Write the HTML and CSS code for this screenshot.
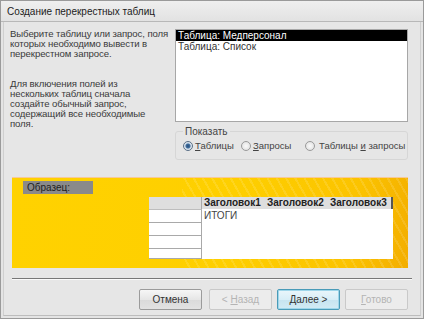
FILE: index.html
```html
<!DOCTYPE html>
<html lang="ru">
<head>
<meta charset="UTF-8">
<title>Создание перекрестных таблиц</title>
<link rel="stylesheet" href="styles.css">
</head>
<body>

<div class="window">
  <div class="titlebar">Создание перекрестных таблиц</div>

  <div class="client">
    <div class="top">
      <div class="intro">
        <p>Выберите таблицу или запрос, поля<br>которых необходимо вывести в<br>перекрестном запросе.</p>
        <p>Для включения полей из<br>нескольких таблиц сначала<br>создайте обычный запрос,<br>содержащий все необходимые<br>поля.</p>
      </div>

      <div class="right">
        <div class="listbox">
          <div class="item selected">Таблица: Медперсонал</div>
          <div class="item">Таблица: Список</div>
        </div>

        <fieldset class="group">
          <legend>Показать</legend>
          <label class="radio first"><span class="dot checked"></span><span><u>Т</u>аблицы</span></label>
          <label class="radio second"><span class="dot"></span><span><u>З</u>апросы</span></label>
          <label class="radio wide"><span class="dot"></span><span>Таблицы <u>и</u> запросы</span></label>
        </fieldset>
      </div>
    </div>

    <!-- sample preview of the crosstab -->
    <div class="sample">
      <div class="stripes"></div>
      <div class="sample-label">Образец:</div>
      <div class="grid">
        <div class="rowheads">
          <div class="rh head"></div>
          <div class="rh"></div>
          <div class="rh"></div>
          <div class="rh"></div>
          <div class="rh last"></div>
        </div>
        <div class="cols">
          <div class="colheads">
            <div class="ch">Заголовок1</div>
            <div class="ch">Заголовок2</div>
            <div class="ch">Заголовок3</div>
          </div>
          <div class="body">ИТОГИ</div>
        </div>
      </div>
    </div>

    <div class="separator"></div>

    <div class="buttons">
      <button class="btn">Отмена</button>
      <button class="btn disabled">&lt; <u>Н</u>азад</button>
      <button class="btn default"><u>Д</u>алее &gt;</button>
      <button class="btn disabled"><u>Г</u>отово</button>
    </div>
  </div>
</div>

</body>
</html>
```

FILE: styles.css
```css
/* General Styles */
html, body {
  margin: 0;
  padding: 0;
  background: #ffffff;
}

body {
  font-family: "Liberation Sans", Arial, sans-serif;
  font-size: 10px;
  color: #333;
}

.window {
  width: 422px;
  height: 317px;
  border: 1px solid #9a9a9a;
  background: #e4e4e4;
  display: flex;
  flex-direction: column;
}

.titlebar {
  height: 20px;
  line-height: 21px;
  padding-left: 6px;
  font-size: 10px;
  color: #222;
  background: linear-gradient(#efefef, #e2e2e2);
  border-bottom: 1px solid #b8b8b8;
}

.client {
  flex: 1;
  margin: 0 2px 2px 2px;
  border-left: 1px solid #cfcfcf;
  border-right: 1px solid #cfcfcf;
  border-bottom: 1px solid #bdbdbd;
  background: #e6e6e6;
  display: flex;
  flex-direction: column;
}

/* Top part */
.top {
  display: flex;
  padding: 7px 0 0 6px;
}

.intro {
  width: 162px;
  color: #3a3a3a;
  font-size: 9.6px;
  letter-spacing: -0.1px;
  white-space: nowrap;
}

.intro p {
  margin: 0 0 20px 0;
  line-height: 10px;
}

.right {
  margin-left: 3px;
  width: 233px;
}

.listbox {
  height: 91px;
  background: #fff;
  border: 1px solid #a7a7a7;
}

.item {
  height: 11px;
  line-height: 11px;
  padding-left: 2px;
  color: #333;
}

.item.selected {
  background: #000;
  color: #fff;
}

.group {
  margin: 4px 0 0 0;
  padding: 3px 0 8px 7px;
  border: 1px solid #d6d6d6;
  border-radius: 3px;
  display: flex;
  align-items: center;
}

.group legend {
  padding: 0 2px;
  margin-left: 0;
  color: #444;
}

.radio {
  display: flex;
  align-items: center;
  color: #444;
  font-size: 9.5px;
  white-space: nowrap;
}

.radio.first {
  width: 58px;
}

.radio.second {
  width: 64px;
}

.dot {
  width: 8px;
  height: 8px;
  border-radius: 50%;
  border: 1px solid #9a9a9a;
  background: radial-gradient(#fafafa, #dcdcdc);
  margin-right: 2px;
  box-sizing: content-box;
}

.radio.wide .dot {
  margin-right: 4px;
}

.dot.checked {
  border-color: #5a6f86;
  background: radial-gradient(circle, #2c4e78 0, #3d6d9e 2px, #cfdbe8 3px, #f3f6f9 5px);
}

/* Sample panel */
.sample {
  position: relative;
  margin: 17px 12px 0 8px;
  height: 90px;
  border-top: 1px solid #f7c997;
  background: linear-gradient(100deg, #ffd200 0%, #fecf00 55%, #fbc300 85%, #f3ae00 100%);
  overflow: hidden;
}

.stripes {
  position: absolute;
  left: 170px;
  top: 0;
  width: 240px;
  height: 90px;
  background: repeating-linear-gradient(60deg, rgba(255,255,255,0) 0 6px, rgba(255,255,255,0.12) 6px 8px);
}

.sample-label {
  position: relative;
  width: 66px;
  height: 13px;
  line-height: 13px;
  margin: 3px 0 0 11px;
  padding-left: 4px;
  background: #8a8a8a;
  color: #222;
}

.grid {
  position: relative;
  display: flex;
  margin: 3px 0 0 137px;
  width: 244px;
  height: 62px;
}

.rowheads {
  width: 61px;
  background: #fff;
  display: flex;
  flex-direction: column;
}

.rh {
  height: 12px;
  border-bottom: 1px solid #a9a9a9;
  border-right: 1px solid #a9a9a9;
}

.rh.head {
  background: #dedede;
  border-bottom-color: #bdbdbd;
}

.rh.last {
  flex: 1;
}

.cols {
  flex: 1;
  display: flex;
  flex-direction: column;
}

.colheads {
  display: flex;
  height: 12px;
  background: #dedede;
  border-right: 2px solid #555;
}

.ch {
  width: 61px;
  font-weight: bold;
  line-height: 12px;
  padding-left: 2px;
  color: #222;
}

.body {
  flex: 1;
  background: #fff;
  padding: 1px 0 0 2px;
  color: #444;
}

/* Separator */
.separator {
  margin: 10px 8px 0 8px;
  height: 1px;
  background: #777;
  border-bottom: 1px solid #fafafa;
}

/* Button Styles */
.buttons {
  display: flex;
  justify-content: flex-end;
  gap: 5px;
  padding: 9px 12px 0 0;
}

.btn {
  width: 63px;
  height: 21px;
  font-family: "Liberation Sans", Arial, sans-serif;
  font-size: 10px;
  color: #333;
  border: 1px solid #9b9b9b;
  border-radius: 2px;
  background: linear-gradient(#f6f6f6, #e6e6e6 50%, #dadada 51%, #e2e2e2);
  padding: 0;
}

.btn.disabled {
  color: #b4b4b4;
  border-color: #c9c9c9;
  background: #ececec;
}

.btn.default {
  border-color: #4a9bb8;
  box-shadow: inset 0 0 0 1px #9fd6ea;
  background: linear-gradient(#eaf6fb, #d8eef7 50%, #c6e4f0 51%, #d2ebf5);
}

.btn:first-child {
  margin-right: 2px;
}
```
